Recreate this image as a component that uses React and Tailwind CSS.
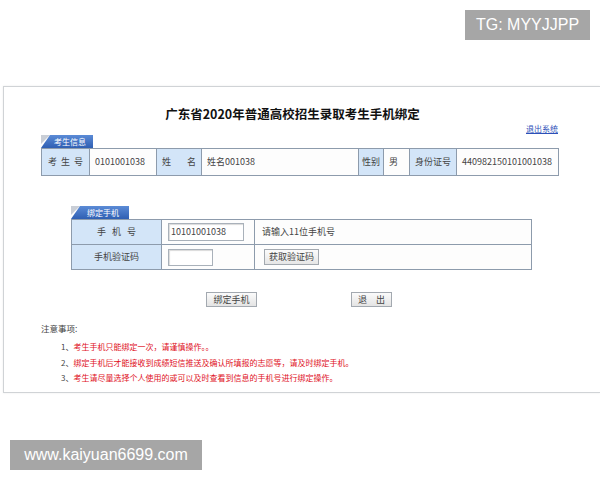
import React from 'react';

const cn = { fontFamily: '"Microsoft YaHei", "Noto Sans CJK SC", "Liberation Sans", sans-serif' };

const Tab = ({ label, width }) => (
    <div className="flex items-end h-[13px]">
        <div className="relative h-[13px]" style={{ width }}>
            {/* little gray corner mark */}
            <div className="absolute left-0 top-0 w-[9px] h-[9px] bg-[#c9ced6] [clip-path:polygon(0_0,100%_0,0_100%)]" />
            <div className="absolute inset-0 bg-gradient-to-b from-[#5b8bd6] to-[#2f5fb3] [clip-path:polygon(9px_0,100%_0,100%_100%,0_100%)] flex items-center justify-center pl-[6px]">
                <span className="text-white text-[8px] leading-none">{label}</span>
            </div>
        </div>
    </div>
);

const Label = ({ children, w, className = '' }) => (
    <td className={`bg-[#d3e5f8] border border-[#8d9bac] text-[#444] whitespace-nowrap overflow-hidden ${className}`} style={{ width: w }}>
        {children}
    </td>
);

const Cell = ({ children, w, className = '' }) => (
    <td className={`bg-[#fdfdfd] border border-[#8d9bac] text-[#444] whitespace-nowrap overflow-hidden ${className}`} style={{ width: w }}>
        {children}
    </td>
);

const App = () => {
    return (
        <div className="relative w-[600px] h-[480px] bg-white overflow-hidden" style={cn}>
            {/* watermark top */}
            <div className="absolute left-[465px] top-[10px] w-[125px] h-[30px] bg-[#a6a6a6] flex items-center justify-center">
                <span className="text-white text-[16px] font-['Liberation_Sans',sans-serif]">TG: MYYJJPP</span>
            </div>

            {/* main panel */}
            <div className="mt-[86px] ml-[3px] h-[307px] border-t border-l border-b border-[#d0d3d6] shadow-[0_0_2px_rgba(0,0,0,0.08)]">
                <div className="w-[517px] ml-[37px]">
                    <div className="pt-[13px] h-[36px] text-center pr-[14px]">
                        <span className="text-[12.5px] font-bold text-[#111] leading-[18px]">广东省2020年普通高校招生录取考生手机绑定</span>
                    </div>
                    <div className="flex justify-end h-[12px]">
                        <span className="text-[8px] leading-[12px] text-[#2c4fb8] underline">退出系统</span>
                    </div>

                    {/* 考生信息 */}
                    <Tab label="考生信息" width={52} />
                    <table className="border-collapse table-fixed w-[517px] text-[9px] [&_td]:h-[27px]">
                        <tbody>
                            <tr>
                                <Label w={48}><div className="flex justify-between px-[6px]"><span>考</span><span>生</span><span>号</span></div></Label>
                                <Cell w={67} className="px-[5px]">0101001038</Cell>
                                <Label w={45}><div className="flex justify-between px-[5px]"><span>姓</span><span>名</span></div></Label>
                                <Cell w={157} className="px-[5px]">姓名001038</Cell>
                                <Label w={25} className="px-[3px]">性别</Label>
                                <Cell w={26} className="px-[5px]">男</Cell>
                                <Label w={47} className="px-[5px]">身份证号</Label>
                                <Cell w={102} className="px-[5px]">440982150101001038</Cell>
                            </tr>
                        </tbody>
                    </table>

                    {/* 绑定手机 */}
                    <div className="ml-[30px] mt-[30px]">
                        <Tab label="绑定手机" width={58} />
                        <table className="border-collapse table-fixed w-[460px] text-[9px] [&_td]:h-[25px]">
                            <tbody>
                                <tr>
                                    <Label w={90}><div className="flex justify-center gap-[6px]"><span>手</span><span>机</span><span>号</span></div></Label>
                                    <Cell w={93} className="px-[6px]">
                                        <div className="w-[76px] h-[18px] bg-white border border-[#a9b1ba] shadow-[inset_1px_1px_1px_rgba(0,0,0,0.15)] flex items-center px-[2px]">10101001038</div>
                                    </Cell>
                                    <Cell w={277} className="px-[7px]">请输入11位手机号</Cell>
                                </tr>
                                <tr>
                                    <Label w={90} className="text-center">手机验证码</Label>
                                    <Cell w={93} className="px-[6px]">
                                        <div className="w-[45px] h-[17px] bg-white border border-[#a9b1ba] shadow-[inset_1px_1px_1px_rgba(0,0,0,0.15)]" />
                                    </Cell>
                                    <Cell w={277} className="px-[9px]">
                                        <div className="inline-flex items-center h-[16px] px-[4px] border border-[#a3a9b0] bg-gradient-to-b from-[#fbfbfb] to-[#e6e6e6]">获取验证码</div>
                                    </Cell>
                                </tr>
                            </tbody>
                        </table>
                    </div>

                    {/* buttons */}
                    <div className="flex mt-[22px] h-[15px] text-[9px] text-[#444]">
                        <div className="ml-[165px] w-[51px] h-[15px] border border-[#a3a9b0] bg-gradient-to-b from-[#fbfbfb] to-[#e4e4e4] flex items-center justify-center">绑定手机</div>
                        <div className="ml-[94px] w-[41px] h-[15px] border border-[#a3a9b0] bg-gradient-to-b from-[#fbfbfb] to-[#e4e4e4] flex items-center justify-center gap-[9px]"><span>退</span><span>出</span></div>
                    </div>

                    {/* notes */}
                    <div className="mt-[15px] text-[8.5px] leading-[12px] text-[#444]">注意事项:</div>
                    <div className="mt-[5px] ml-[20px] text-[8px] leading-[15.5px] text-[#e0101c]">
                        <div><span className="text-[#444]">1、</span>考生手机只能绑定一次，请谨慎操作。。</div>
                        <div><span className="text-[#444]">2、</span>绑定手机后才能接收到成绩短信推送及确认所填报的志愿等，请及时绑定手机。</div>
                        <div><span className="text-[#444]">3、</span>考生请尽量选择个人使用的或可以及时查看到信息的手机号进行绑定操作。</div>
                    </div>
                </div>
            </div>

            {/* watermark bottom */}
            <div className="absolute left-[10px] top-[440px] w-[192px] h-[30px] bg-[#a6a6a6] flex items-center justify-center">
                <span className="text-white text-[16px] font-['Liberation_Sans',sans-serif]">www.kaiyuan6699.com</span>
            </div>
        </div>
    );
};

export default App;
